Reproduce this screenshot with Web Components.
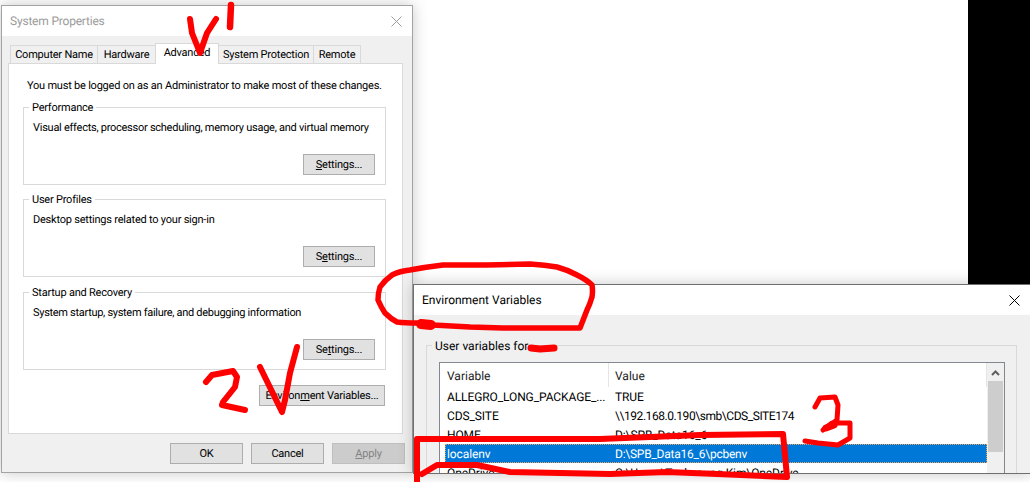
<!DOCTYPE html>
<html><head><meta charset="utf-8"><style>html,body{margin:0;padding:0;background:#fff}</style></head>
<body>
<x-desktop>
  <x-window title="System Properties" style="--l:1px;--t:5px;--w:412px;--h:468px;--tc:#9b9b9b;--bd:#a3a3a3;--xc:#9b9b9b;--tx:8px;--xm:10px;--z:1;--tls:-.2px">
    <x-tabs>
      <x-tab style="--tw:88px">Computer Name</x-tab>
      <x-tab style="--tw:59px">Hardware</x-tab>
      <x-tab active style="--tw:64px">Advanced</x-tab>
      <x-tab style="--tw:96px">System Protection</x-tab>
      <x-tab style="--tw:48px">Remote</x-tab>
    </x-tabs>
    <x-panel>
      <x-note>You must be logged on as an Administrator to make most of these changes.</x-note>
      <x-group label="Performance">
        <span style="letter-spacing:-.26px">Visual effects, processor scheduling, memory usage, and virtual memory</span>
        <x-btn slot="action" style="--bw:72px"><u>S</u>ettings...</x-btn>
      </x-group>
      <x-group label="User Profiles" style="--mt:14px">
        <span>Desktop settings related to your sign-in</span>
        <x-btn slot="action" style="--bw:72px">S<u>e</u>ttings...</x-btn>
      </x-group>
      <x-group label="Startup and Recovery" style="--mt:15px">
        <span style="letter-spacing:-.3px">System startup, system failure, and debugging information</span>
        <x-btn slot="action" style="--bw:72px">Se<u>t</u>tings...</x-btn>
      </x-group>
      <x-envrow><x-btn style="--bw:126px">Environ<u>m</u>ent Variables...</x-btn></x-envrow>
    </x-panel>
    <x-footer>
      <x-btn style="--bw:73px">OK</x-btn>
      <x-btn style="--bw:73px">Cancel</x-btn>
      <x-btn disabled style="--bw:73px"><u>A</u>pply</x-btn>
    </x-footer>
  </x-window>

  <x-window title="Environment Variables" style="--l:413px;--t:284px;--w:618px;--h:190px;--tc:#000;--bd:#6f6f6f;--xc:#000;--tx:8px;--xm:10px;--z:2">
    <x-envbody>
      <x-group label="User variables for" flat>
        <x-list>
          <x-row name="ALLEGRO_LONG_PACKAGE_..." value="TRUE"></x-row>
          <x-row name="CDS_SITE" value="\\192.168.0.190\smb\CDS_SITE174" style="--vls:-.44px"></x-row>
          <x-row name="HOME" value="D:\SPB_Data16_6"></x-row>
          <x-row selected name="localenv" value="D:\SPB_Data16_6\pcbenv" style="--vls:-.24px"></x-row>
          <x-row name="OneDrive" value="C:\Users\Taehyoung Kim\OneDrive"></x-row>
        </x-list>
      </x-group>
    </x-envbody>
  </x-window>

  <x-marks></x-marks>
</x-desktop>

<script>
const FONT = 'Roboto,"Noto Sans",sans-serif';
function def(name, css, html, init){
  customElements.define(name, class extends HTMLElement{
    constructor(){
      super();
      const r=this.attachShadow({mode:'open'});
      r.innerHTML='<style>'+css+'</style>'+html;
    }
    connectedCallback(){ if(init) init(this,this.shadowRoot); }
  });
}
const SMALL='font-size:11px;letter-spacing:-.22px;';
def('x-desktop',
 `:host{display:block;position:relative;width:1030px;height:482px;overflow:hidden;background:#fff;
   font:12px/16px ${FONT};color:#000;text-rendering:geometricPrecision}
  .black{position:absolute;left:968px;top:0;width:62px;height:284px;background:#000}`,
 `<div class="black"></div><slot></slot>`);

def('x-window',
 `:host{position:absolute;left:var(--l);top:var(--t);width:var(--w);height:var(--h);z-index:var(--z);
   box-sizing:border-box;display:flex;flex-direction:column;background:#f0f0f0;
   border:1px solid var(--bd);box-shadow:0 0 14px rgba(0,0,0,.22);overflow:hidden}
  header{flex:none;height:30px;background:#fff;display:flex;align-items:center;justify-content:space-between;
   padding-left:var(--tx);color:var(--tc);letter-spacing:var(--tls,0)}
  svg{flex:none;margin-right:var(--xm)}
  main{flex:1;min-height:0;display:flex;flex-direction:column}`,
 `<header><span id="t"></span><svg width="11" height="11" viewBox="0 0 11 11"><path d="M.5.5l10 10M10.5.5l-10 10" stroke="currentColor" fill="none"/></svg></header><main><slot></slot></main>`,
 (h,r)=>{ r.getElementById('t').textContent=h.getAttribute('title');
   h.removeAttribute('title');
   r.querySelector('svg').style.color=getComputedStyle(h).getPropertyValue('--xc'); });

def('x-tabs',
 `:host{display:flex;flex:none;align-items:flex-end;height:20px;margin:7px 0 0 9px;position:relative;z-index:1;${SMALL}}`,
 `<slot></slot>`);
def('x-tab',
 `:host{display:flex;align-items:center;justify-content:center;box-sizing:border-box;width:var(--tw);height:18px;padding-top:1px;
   background:#f0f0f0;border:1px solid #d9d9d9;border-bottom:0;margin-left:-1px;white-space:nowrap}
  :host([active]){height:21px;background:#fff;margin-bottom:-1px;position:relative;z-index:1;padding:0 0 2px}`,
 `<slot></slot>`);
def('x-panel',
 `:host{display:flex;flex-direction:column;flex:none;box-sizing:border-box;width:395px;height:371px;margin-left:6px;
   background:#fff;border:1px solid #d9d9d9;padding:0 16px 0 14px;${SMALL}}`,
 `<slot></slot>`);
def('x-note',`:host{display:block;flex:none;height:29px;margin:14px 0 0 4px;white-space:nowrap}`,`<slot></slot>`);
def('x-group',
 `:host{display:flex;flex-direction:column;justify-content:space-between;position:relative;flex:none;box-sizing:border-box;
   height:78px;margin-top:var(--mt,0);border:1px solid #d9d9d9;padding:12px 10px 9px 9px;white-space:nowrap}
  :host([flat]){height:170px;padding:0}
  .lg{position:absolute;left:5px;top:-8px;padding:0 3px;background:var(--lb,#fff)}
  .act{display:flex;justify-content:flex-end}`,
 `<span class="lg" id="l"></span><div><slot></slot></div><div class="act"><slot name="action"></slot></div>`,
 (h,r)=>{r.getElementById('l').textContent=h.getAttribute('label')});
def('x-btn',
 `:host{display:inline-flex;align-items:center;justify-content:center;box-sizing:border-box;width:var(--bw);height:21px;
   background:#e1e1e1;border:1px solid #adadad;white-space:nowrap;flex:none}
  :host([disabled]){background:#ccc;border-color:#bfbfbf;color:#838383}`,
 `<slot></slot>`);
def('x-envrow',`:host{display:flex;justify-content:flex-end;margin:15px 1px 0 0;flex:none}`,`<slot></slot>`);
def('x-footer',`:host{display:flex;justify-content:flex-end;gap:8px;flex:none;margin:9px 7px 0 0;${SMALL}}`,`<slot></slot>`);
def('x-envbody',`:host{display:block;flex:1;padding:30px 13px 0 12px;--lb:#f0f0f0}`,`<slot></slot>`);
def('x-list',
 `:host{display:block;box-sizing:border-box;margin:16px 11px 0 12px;height:140px;background:#fff;border:1px solid #828790;position:relative}
  .wrap{display:flex;height:100%}
  .col{flex:1;min-width:0}
  .head{display:grid;grid-template-columns:168px 1fr 1px;height:24px;align-items:center;color:#222}
  .head span{padding:1px 0 0 7px;height:24px;display:flex;align-items:center;box-sizing:border-box}
  .head span+span{border-left:1px solid #e5e5e5;padding-left:6px}
  .head i{display:block;height:24px;background:#e5e5e5}
  .sb{flex:none;width:17px;background:#f0f0f0;display:flex;flex-direction:column;align-items:center}
  .sb svg{display:block;margin:7px 0 5px}
  .th{width:15px;height:71px;background:#cdcdcd}`,
 `<div class="wrap"><div class="col"><div class="head"><span>Variable</span><span>Value</span><i></i></div><slot></slot></div>
  <div class="sb"><svg width="9" height="6" viewBox="0 0 9 6"><path d="M1 5l3.5-3.5L8 5" fill="none" stroke="#606060" stroke-width="2"/></svg><div class="th"></div></div></div>`);
def('x-row',
 `:host{display:grid;grid-template-columns:168px 1fr;box-sizing:border-box;height:19px;margin-left:5px;align-items:center;border:1px solid transparent;white-space:nowrap;letter-spacing:-.1px}
  :host([selected]){background:#0078d7;color:#fff;border:1px dotted #e8a45a}
  span{padding:1px 0 0 1px}
  #b{letter-spacing:var(--vls,-.1px)}`,
 `<span id="a"></span><span id="b"></span>`,
 (h,r)=>{r.getElementById('a').textContent=h.getAttribute('name');r.getElementById('b').textContent=h.getAttribute('value')});
def('x-marks',
 `:host{position:absolute;left:0;top:0;width:1030px;height:482px;z-index:5;pointer-events:none}
  svg{display:block}
  path{fill:none;stroke:#f00;stroke-linecap:round;stroke-linejoin:round}`,
 `<svg width="1030" height="482" viewBox="0 0 1030 482">
   <path stroke-width="6" d="M190 19L192 33L200 53L207 33L216 19"/>
   <path stroke-width="6.5" d="M231 5L230 27"/>
   <path stroke-width="5.5" d="M433 325L417 323Q405 323 397 322Q391 319 385 313Q381 307 378 300Q378 293 380 287Q385 280 392 275Q400 271 410 270Q426 267 443 265L487 265L530 264Q545 265 557 267Q568 270 577 275Q587 280 592 285Q593 291 592 297Q590 304 587 310L580 328L503 328L470 327L433 325"/>
   <path stroke-width="10" d="M421 324L431 325"/>
   <path stroke-width="7" d="M531 348L540 349L554 348"/>
   <path stroke-width="6" d="M417 482L417 439L600 439L700 435L783 434L785 455L787 477L717 474L667 472L610 474L510 472L477 465L437 465L422 474"/>
   <path stroke-width="6" d="M206 382L212 375L233 371L237 377L235 387L223 402L222 405L245 410"/>
   <path stroke-width="6" d="M260 367L282 412L285 400L290 373L297 347"/>
   <path stroke-width="5" d="M815 407L820 398L835 397L838 405L837 420L823 430L832 423L850 423L850 438L838 445L818 443L805 441"/>
   <path stroke-width="7" d="M826 428L834 425"/>
 </svg>`);
</script>
</body></html>
